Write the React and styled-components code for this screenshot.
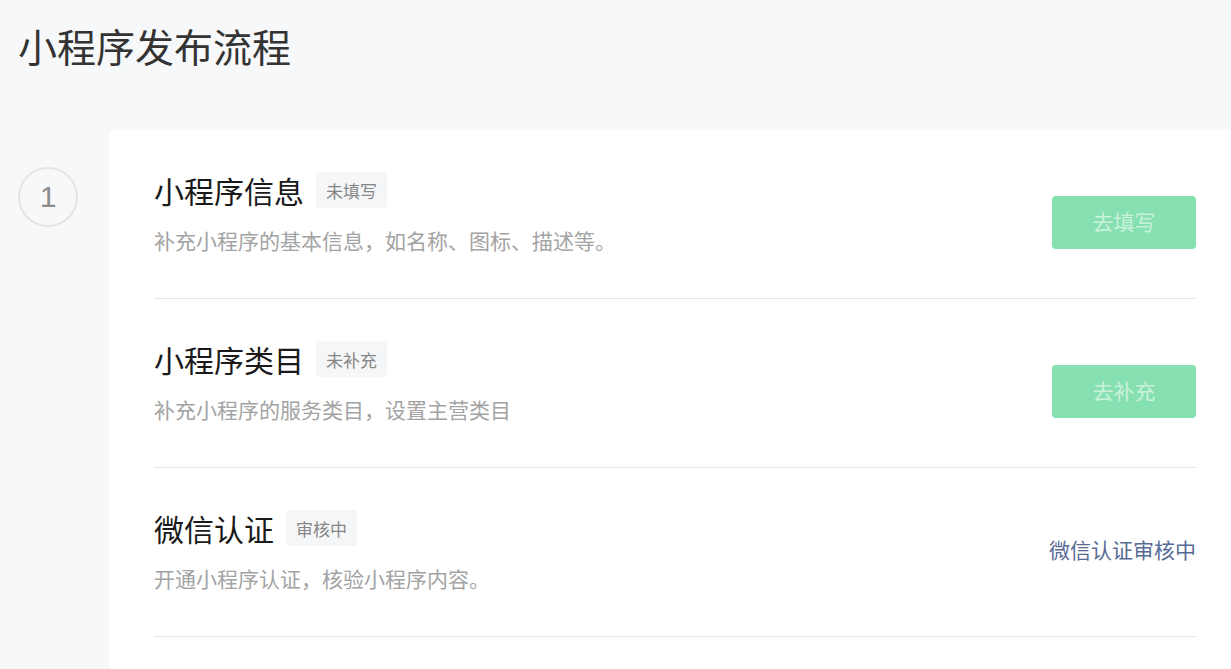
import React from "react";
import styled, { createGlobalStyle } from "styled-components";

const GlobalStyle = createGlobalStyle`
  html, body {
    margin: 0;
    padding: 0;
    background: #f7f8fa;
    overflow: hidden;
  }
  body {
    font-family: "Noto Sans CJK SC", "Noto Sans", sans-serif;
  }
`;

const Page = styled.div`
  height: 669px;
  overflow: hidden;
  background: #f7f8fa;
`;

const PageTitle = styled.h1`
  margin: 0;
  padding: 16px 0 0 18px;
  height: 58px;
  font-size: 39px;
  line-height: 58px;
  font-weight: 400;
  color: #333;
`;

const Body = styled.div`
  display: flex;
  margin-top: 56px;
`;

const StepCol = styled.div`
  width: 109px;
  flex-shrink: 0;
  padding: 37px 0 0 18px;
  box-sizing: border-box;
`;

const StepCircle = styled.div`
  width: 60px;
  height: 60px;
  box-sizing: border-box;
  border: 2px solid #e4e5e7;
  border-radius: 50%;
  display: flex;
  align-items: center;
  justify-content: center;
  font-family: "Liberation Sans", Arial, sans-serif;
  font-size: 30px;
  color: #8c8c8c;
`;

const Card = styled.div`
  flex: 1;
  background: #fff;
  border-radius: 5px 0 0 0;
  padding: 0 35px 0 45px;
  min-height: 600px;
`;

const Item = styled.div`
  display: flex;
  align-items: center;
  justify-content: space-between;
  padding: 42px 0 43px;
  border-bottom: 1px solid #e5e5e5;
`;

const Info = styled.div`
  display: flex;
  flex-direction: column;
`;

const TitleRow = styled.div`
  display: flex;
  align-items: center;
  height: 36px;
`;

const ItemTitle = styled.span`
  font-size: 30px;
  line-height: 36px;
  color: #1a1a1a;
`;

const Badge = styled.span`
  margin-left: 12px;
  height: 36px;
  padding: 0 10px;
  display: inline-flex;
  align-items: center;
  background: #f5f6f7;
  border-radius: 3px;
  font-size: 17px;
  color: #858585;
`;

const Desc = styled.div`
  margin-top: 17px;
  font-size: 21px;
  line-height: 30px;
  color: #a3a3a3;
`;

const ActionButton = styled.button`
  width: 144px;
  height: 53px;
  margin-top: 18px;
  padding: 0 0 3px;
  border: none;
  border-radius: 4px;
  background: #86e0b1;
  color: #c9f2da;
  font-family: inherit;
  font-size: 21px;
  cursor: not-allowed;
`;

const StatusText = styled.span`
  margin-top: -6px;
  font-size: 21px;
  color: #576b95;
`;

const steps = [
  {
    title: "小程序信息",
    badge: "未填写",
    desc: "补充小程序的基本信息，如名称、图标、描述等。",
    action: "去填写",
  },
  {
    title: "小程序类目",
    badge: "未补充",
    desc: "补充小程序的服务类目，设置主营类目",
    action: "去补充",
  },
  {
    title: "微信认证",
    badge: "审核中",
    desc: "开通小程序认证，核验小程序内容。",
    status: "微信认证审核中",
  },
];

const App = () => {
  return (
    <Page>
      <GlobalStyle />
      <PageTitle>小程序发布流程</PageTitle>
      <Body>
        <StepCol>
          <StepCircle>1</StepCircle>
        </StepCol>
        <Card>
          {steps.map((s) => (
            <Item key={s.title}>
              <Info>
                <TitleRow>
                  <ItemTitle>{s.title}</ItemTitle>
                  <Badge>{s.badge}</Badge>
                </TitleRow>
                <Desc>{s.desc}</Desc>
              </Info>
              {s.action ? (
                <ActionButton disabled>{s.action}</ActionButton>
              ) : (
                <StatusText>{s.status}</StatusText>
              )}
            </Item>
          ))}
        </Card>
      </Body>
    </Page>
  );
};

export default App;
